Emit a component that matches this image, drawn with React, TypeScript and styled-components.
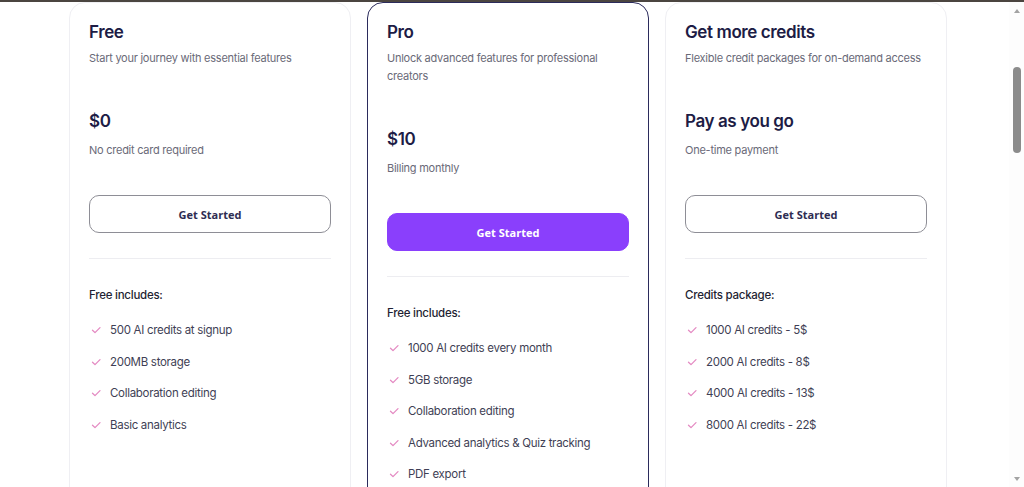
import React from 'react';
import styled, { createGlobalStyle } from 'styled-components';

const GlobalStyle = createGlobalStyle`
  html, body {
    margin: 0;
    padding: 0;
    background: #ffffff;
  }
  body {
    font-family: Inter, "Noto Sans", sans-serif;
    border-top: 2px solid #4b4540;
    overflow: hidden;
  }
`;

const plans = [
  {
    name: 'Free',
    blurb: 'Start your journey with essential features',
    price: '$0',
    note: 'No credit card required',
    heading: 'Free includes:',
    items: ['500 AI credits at signup', '200MB storage', 'Collaboration editing', 'Basic analytics'],
    featured: false,
  },
  {
    name: 'Pro',
    blurb: 'Unlock advanced features for professional creators',
    price: '$10',
    note: 'Billing monthly',
    heading: 'Free includes:',
    items: [
      '1000 AI credits every month',
      '5GB storage',
      'Collaboration editing',
      'Advanced analytics & Quiz tracking',
      'PDF export',
    ],
    featured: true,
  },
  {
    name: 'Get more credits',
    blurb: 'Flexible credit packages for on-demand access',
    price: 'Pay as you go',
    note: 'One-time payment',
    heading: 'Credits package:',
    items: ['1000 AI credits - 5$', '2000 AI credits - 8$', '4000 AI credits - 13$', '8000 AI credits - 22$'],
    featured: false,
  },
];

const CheckMark = () => (
  <svg width="14" height="10" viewBox="0 0 14 10" fill="none">
    <path d="M3.5 5.2 L6 7.6 L11 2.6" stroke="#e48ac2" strokeWidth="1.3" strokeLinecap="round" strokeLinejoin="round" />
  </svg>
);

const App = () => {
  return (
    <>
      <GlobalStyle />
      <Window>
        <Pricing>
          {plans.map((plan) => (
            <Card key={plan.name} $featured={plan.featured}>
              <Title>{plan.name}</Title>
              <Blurb>{plan.blurb}</Blurb>
              <Price>{plan.price}</Price>
              <Note>{plan.note}</Note>
              <StartButton $featured={plan.featured}>Get Started</StartButton>
              <Divider />
              <ListHeading>{plan.heading}</ListHeading>
              <Features>
                {plan.items.map((item) => (
                  <Feature key={item}>
                    <CheckMark />
                    <span>{item}</span>
                  </Feature>
                ))}
              </Features>
            </Card>
          ))}
        </Pricing>
        <Scrollbar>
          <Arrow $up />
          <Track>
            <Thumb />
          </Track>
          <Arrow />
        </Scrollbar>
      </Window>
    </>
  );
};

// CSS styles
const Window = styled.div`
  display: flex;
  height: 485px;
`;

const Pricing = styled.div`
  flex: 1;
  display: flex;
  justify-content: center;
  align-items: flex-start;
  gap: 16px;
  padding-left: 7px;
  overflow: hidden;
`;

const Scrollbar = styled.div`
  width: 15px;
  display: flex;
  flex-direction: column;
  align-items: center;
  background: #fdfdfd;
`;

const Arrow = styled.div<{ $up?: boolean }>`
  width: 0;
  height: 0;
  margin: ${(p) => (p.$up ? '7px 0 0' : '0 0 6px')};
  border-left: 3.5px solid transparent;
  border-right: 3.5px solid transparent;
  ${(p) => (p.$up ? 'border-bottom: 4px solid #a3a3a3;' : 'border-top: 4px solid #a3a3a3;')}
`;

const Track = styled.div`
  flex: 1;
  width: 100%;
  display: flex;
  justify-content: center;
`;

const Thumb = styled.div`
  margin-top: 54px;
  width: 8px;
  height: 86px;
  border-radius: 4px;
  background: #8b8b8b;
`;

const Card = styled.div<{ $featured: boolean }>`
  box-sizing: border-box;
  flex-shrink: 0;
  width: 282px;
  padding: 17px 19px 90px;
  border: 1px solid ${(p) => (p.$featured ? '#2b2b5c' : '#efeff3')};
  border-radius: 16px;
  background: #fff;
  display: flex;
  flex-direction: column;
`;

const Title = styled.h2`
  margin: 0;
  font-size: 17px;
  line-height: 24px;
  font-weight: 600;
  letter-spacing: -0.4px;
  color: #1d1c45;
`;

const Blurb = styled.p`
  margin: 5px 0 0;
  font-size: 11px;
  line-height: 18px;
  letter-spacing: -0.25px;
  color: #6a6a78;
`;

const Price = styled.div`
  margin-top: 42px;
  font-size: 17px;
  line-height: 24px;
  font-weight: 600;
  letter-spacing: -0.4px;
  color: #1d1c45;
`;

const Note = styled.div`
  margin-top: 8px;
  font-size: 11px;
  line-height: 18px;
  letter-spacing: -0.25px;
  color: #6a6a78;
`;

const StartButton = styled.button<{ $featured: boolean }>`
  margin-top: 36px;
  height: 38px;
  width: 100%;
  border-radius: 10px;
  border: 1px solid ${(p) => (p.$featured ? '#8a3ffc' : '#8e8e96')};
  background: ${(p) => (p.$featured ? '#8a3ffc' : '#fff')};
  color: ${(p) => (p.$featured ? '#fff' : '#2e2d52')};
  font-family: "Open Sans", sans-serif;
  font-size: 11px;
  font-weight: 700;
  cursor: pointer;
`;

const Divider = styled.hr`
  margin: 25px 0 0;
  border: none;
  border-top: 1px solid #ededf1;
`;

const ListHeading = styled.div`
  margin-top: 27px;
  font-size: 11.5px;
  line-height: 18px;
  font-weight: 500;
  letter-spacing: -0.25px;
  color: #1f1f33;
`;

const Features = styled.ul`
  list-style: none;
  margin: 17px 0 0;
  padding: 0;
  display: flex;
  flex-direction: column;
  gap: 13.6px;
`;

const Feature = styled.li`
  display: flex;
  align-items: center;
  gap: 7px;
  font-size: 11.5px;
  line-height: 18px;
  letter-spacing: -0.3px;
  color: #3f3f55;
`;

export default App;
